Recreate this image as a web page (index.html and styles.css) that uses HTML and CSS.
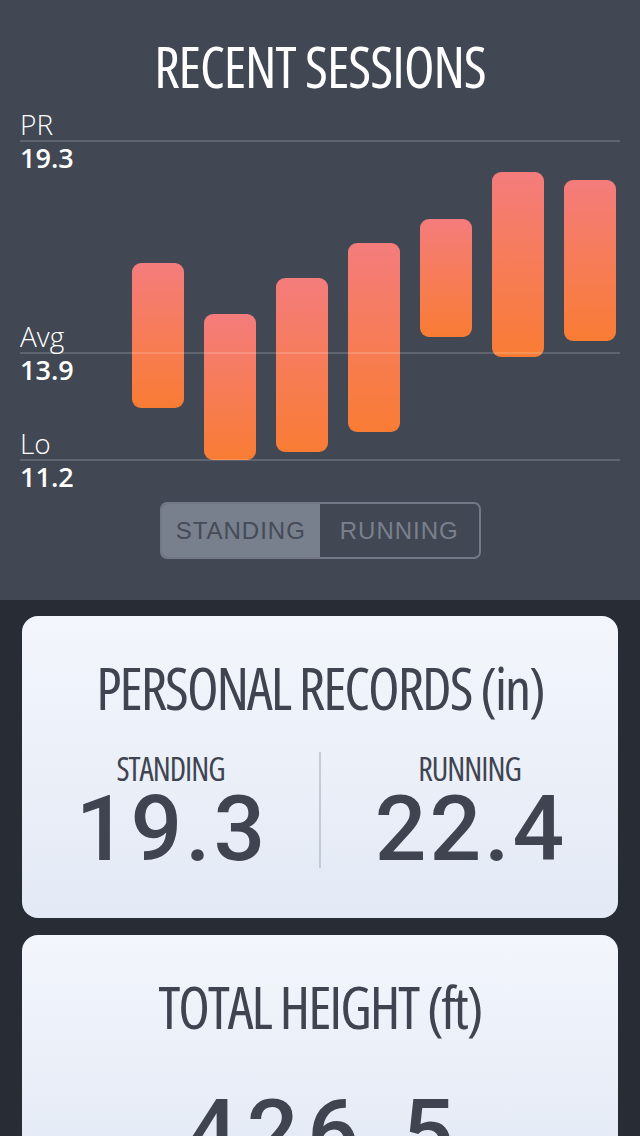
FILE: index.html
```html
<!DOCTYPE html>
<html lang="en">
<head>
  <meta charset="UTF-8">
  <title>Recent Sessions</title>
  <link rel="stylesheet" href="styles.css">
</head>
<body>
  <div class="top">
    <h1 class="title">RECENT SESSIONS</h1>
    <div class="chart">
      <div class="mark" style="top:41px">
        <span class="markName">PR</span>
        <span class="markValue">19.3</span>
      </div>
      <div class="mark" style="top:253px">
        <span class="markName">Avg</span>
        <span class="markValue">13.9</span>
      </div>
      <div class="mark" style="top:360px">
        <span class="markName">Lo</span>
        <span class="markValue">11.2</span>
      </div>
      <div class="bar" style="left:132px;top:163px;height:145px"></div>
      <div class="bar" style="left:204px;top:214px;height:146px"></div>
      <div class="bar" style="left:276px;top:178px;height:174px"></div>
      <div class="bar" style="left:348px;top:143px;height:189px"></div>
      <div class="bar" style="left:420px;top:119px;height:118px"></div>
      <div class="bar" style="left:492px;top:72px;height:185px"></div>
      <div class="bar" style="left:564px;top:80px;height:161px"></div>
      <div class="rule" style="top:41px"></div>
      <div class="rule" style="top:253px"></div>
      <div class="rule" style="top:360px"></div>
    </div>
    <div class="toggle">
      <span class="toggleItem active">STANDING</span>
      <span class="toggleItem">RUNNING</span>
    </div>
  </div>

  <div class="cards">
    <div class="card">
      <h2 class="cardTitle">PERSONAL RECORDS (in)</h2>
      <div class="records">
        <div class="record">
          <div class="recordName">STANDING</div>
          <div class="bigNum">19.3</div>
        </div>
        <div class="record">
          <div class="recordName">RUNNING</div>
          <div class="bigNum">22.4</div>
        </div>
      </div>
    </div>
    <div class="card">
      <h2 class="cardTitle">TOTAL HEIGHT (ft)</h2>
      <div class="bigNum totalNum">426.5</div>
    </div>
  </div>
</body>
</html>
```

FILE: styles.css
```css
body{
  margin: 0;
  background: #282c35;
  font-family: "Open Sans", Roboto, sans-serif;
  overflow: hidden;
  height: 1136px;
}
.top{
  background: #414753;
  padding: 0 0 41px 0;
}
.title{
  margin: 0;
  padding-top: 38px;
  height: 100px;
  box-sizing: border-box;
  text-align: center;
  color: #fff;
  font-size: 56px;
  line-height: 56px;
  font-weight: 400;
  font-stretch: 75%;
  letter-spacing: -1px;
}
.chart{
  position: relative;
  height: 400px;
}
.rule{
  position: absolute;
  left: 20px;
  right: 20px;
  height: 2px;
  margin-top: -1px;
  background: rgba(255,255,255,0.16);
}
.mark{
  position: absolute;
  left: 20px;
  color: #fff;
}
.markName{
  position: absolute;
  bottom: 3px;
  left: 0;
  font-size: 28px;
  font-weight: 300;
  line-height: 28px;
}
.markValue{
  position: absolute;
  top: 3px;
  left: 0;
  font-size: 27px;
  font-weight: 600;
  line-height: 28px;
}
.bar{
  position: absolute;
  width: 52px;
  border-radius: 9px;
  background: linear-gradient(#f47c7c, #f97c34);
}
.toggle{
  display: flex;
  width: 321px;
  height: 57px;
  margin: 2px auto 0;
  box-sizing: border-box;
  border: 2px solid #737987;
  border-radius: 7px;
  overflow: hidden;
}
.toggleItem{
  flex: 1;
  display: flex;
  align-items: center;
  justify-content: center;
  font-family: "Liberation Sans", Arial, sans-serif;
  font-size: 24px;
  letter-spacing: 1px;
  color: #7a808d;
}
.toggleItem.active{
  background: #787f8d;
  color: #454b57;
}
.cards{
  padding: 16px 22px 0;
}
.card{
  background: linear-gradient(#f3f6fc, #e3e9f5);
  border-radius: 16px;
  margin-bottom: 17px;
  color: #3f4450;
  text-align: center;
}
.cardTitle{
  margin: 0;
  padding-top: 37px;
  font-size: 58px;
  line-height: 70px;
  font-weight: 400;
  font-stretch: 75%;
  letter-spacing: -2px;
}
.records{
  display: flex;
  margin-top: 29px;
  padding-bottom: 50px;
}
.record{
  flex: 1;
}
.record + .record{
  border-left: 2px solid #c3cad8;
}
.recordName{
  font-size: 32px;
  line-height: 34px;
  font-weight: 400;
  font-stretch: 75%;
  letter-spacing: -1px;
}
.bigNum{
  margin-top: 4px;
  font-family: Roboto, sans-serif;
  font-size: 91px;
  font-weight: 500;
  line-height: 78px;
  letter-spacing: 3px;
  text-indent: 3px;
}
.totalNum{
  margin-top: 52px;
  letter-spacing: 9px;
  text-indent: 9px;
}
```
